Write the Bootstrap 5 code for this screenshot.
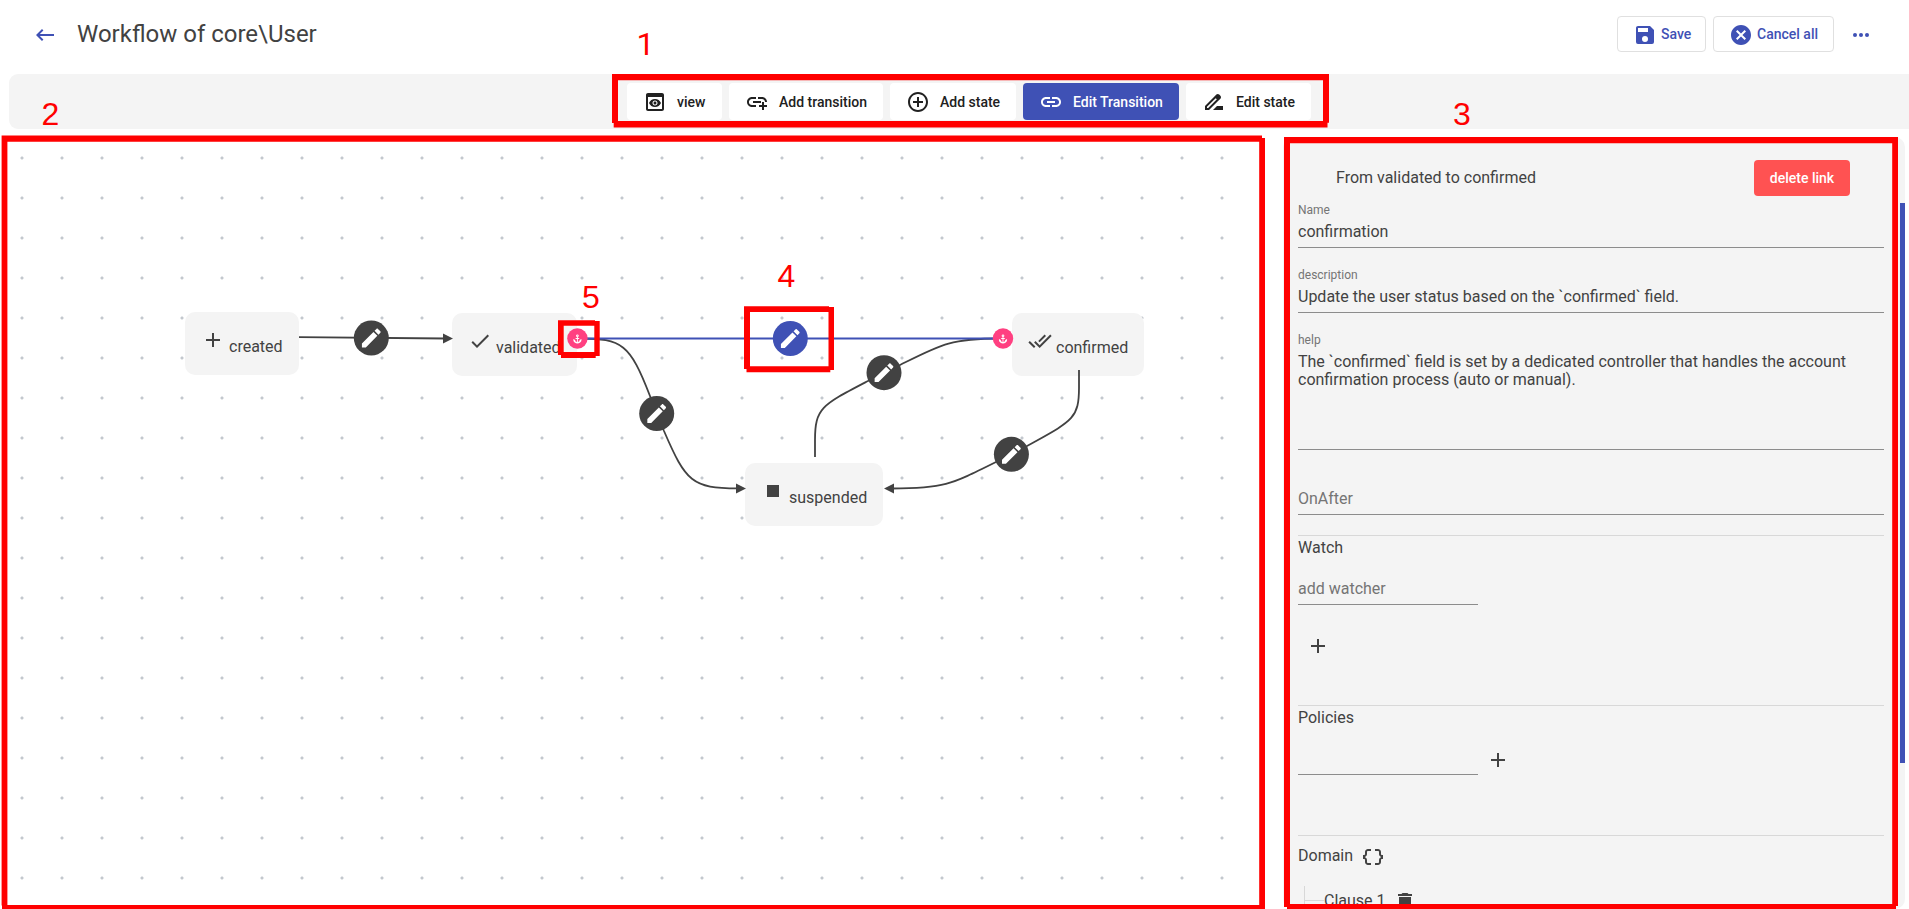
<!DOCTYPE html>
<html lang="en">
<head>
<meta charset="utf-8">
<title>Workflow of core\User</title>
<link rel="stylesheet" href="https://cdn.jsdelivr.net/npm/bootstrap@5.3.0/dist/css/bootstrap.min.css">
<script src="https://cdn.jsdelivr.net/npm/bootstrap@5.3.0/dist/js/bootstrap.bundle.min.js"></script>
<style>
  :root { --ink:#424242; --brand:#3f51b5; --panel:#f4f4f4; }
  body { font-family:Roboto,"Liberation Sans",sans-serif; color:var(--ink); height:909px; width:1909px; line-height:18px; }
  svg { display:block; flex:none; }
  .ico { width:24px; height:24px; fill:currentColor; }
  .topbar { height:74px; padding:0 42px 6px 33px; color:var(--brand); }
  .topbar h1 { font-size:24px; line-height:28px; font-weight:400; color:var(--ink); margin:0 0 0 20px; }
  .btn { font-size:14px; font-weight:500; line-height:20px; border-radius:4px; --bs-btn-border-color:transparent; white-space:nowrap; }
  .btn-head { height:36px; padding:0 15px; border-color:#e0e0e0; color:var(--brand); background:#fff; }
  .toolbar { height:55px; margin-left:9px; padding:0 0 0 618px; background:var(--panel); border-radius:9px 0 0 9px; gap:7px; }
  .btn-tool { height:37px; padding:0 16px; border:0; gap:10px; color:#212121; background:#fff; }
  .btn-tool.active { background:var(--brand) !important; color:#fff !important; }
  .board { width:1262px; height:772px; margin-top:8px; background:radial-gradient(circle at 20px 20px,#c3c8ce 1px,transparent 2px) 2px 1px/40px 40px; overflow:hidden; }
  .node { position:absolute; height:63px; padding:16px; background:var(--panel); border-radius:10px; font-size:16px; gap:4px; white-space:nowrap; }
  .node span { margin-top:10px; }
  .sidebar { width:622px; height:772px; margin:8px 4px 0 0; padding:23px 21px 0 15px; background:var(--panel); border-radius:10px; overflow:hidden; font-size:16px; }
  .btn-del { width:96px; height:36px; padding:0; background:#ff5252; color:#fff; border:0; margin-right:34px; }
  .field { border-bottom:1px solid #8c8c8c; padding:20px 0 6px; }
  .field label { display:block; font-size:12px; line-height:14px; color:#757575; margin-bottom:6px; }
  .field .value { height:18px; }
  .field .value.tall { height:90px; }
  .hint { color:#757575; }
  .short { width:180px; padding-top:0; }
  .rule { height:1px; background:#d8d8d8; margin-bottom:3px; }
  .thumb { position:absolute; left:1900px; top:203px; width:5px; height:560px; background:var(--brand); }
  .twig { width:20px; height:18px; margin-left:6px; border-left:1px solid #d8d8d8; }
  .twig i { display:block; margin-top:14px; height:1px; background:#d8d8d8; }
  .overlay { position:absolute; left:0; top:0; }
</style>
</head>
<body class="position-relative overflow-hidden bg-white">
<svg width="0" height="0" class="position-absolute"><defs>
  <symbol id="plus" viewBox="0 0 24 24"><path d="M19,13H13V19H11V13H5V11H11V5H13V11H19V13Z"/></symbol>
  <symbol id="pencil" viewBox="0 0 24 24"><path d="M20.71,7.04C21.1,6.65 21.1,6 20.71,5.63L18.37,3.29C18,2.9 17.35,2.9 16.96,3.29L15.12,5.12L18.87,8.87M17.81,9.93L14.06,6.18L3,17.25V21H6.75L17.81,9.93Z"/></symbol>
  <symbol id="anchor-sign" viewBox="0 0 24 24"><path d="M12 2a3 3 0 0 0-1 5.83V10H8v2h3v6.92C9.2 18.6 7.5 17.4 6.6 16L8 14.6 3 12v3c0 3.9 4.9 7 9 7s9-3.1 9-7v-3l-5 2.6L17.4 16c-.9 1.4-2.6 2.6-4.4 2.92V12h3v-2h-3V7.83A3 3 0 0 0 12 2zm0 2a1 1 0 1 1 0 2 1 1 0 0 1 0-2z"/></symbol>
  <g id="edit"><circle r="17.5"/><use href="#pencil" x="-12.5" y="-12.5" width="25" height="25" fill="#fff"/></g>
  <g id="anchor"><circle r="10.2" fill="#ff4081"/><use href="#anchor-sign" x="-5.4" y="-4.9" width="10.8" height="10.8" fill="#fff"/></g>
</defs></svg>

<header class="topbar d-flex align-items-center">
  <svg class="ico" style="margin-top:2px" viewBox="0 0 24 24"><path d="M21,11H6.83L10.41,7.41L9,6L3,12L9,18L10.41,16.58L6.83,13H21V11Z"/></svg>
  <h1>Workflow of core\User</h1>
  <button class="btn btn-head d-flex align-items-center ms-auto" style="width:89px"><svg class="ico me-1" style="margin-top:2px" viewBox="0 0 24 24"><path d="M15,9H5V5H15M12,19A3,3 0 0,1 9,16A3,3 0 0,1 12,13A3,3 0 0,1 15,16A3,3 0 0,1 12,19M17,3H5C3.89,3 3,3.9 3,5V19A2,2 0 0,0 5,21H19A2,2 0 0,0 21,19V7L17,3Z"/></svg>Save</button>
  <button class="btn btn-head d-flex align-items-center" style="margin-left:7px;width:121px"><svg class="ico me-1" style="margin-top:2px" viewBox="0 0 24 24"><path d="M12,2C17.53,2 22,6.47 22,12C22,17.53 17.53,22 12,22C6.47,22 2,17.53 2,12C2,6.47 6.47,2 12,2M15.59,7L12,10.59L8.41,7L7,8.41L10.59,12L7,15.59L8.41,17L12,13.41L15.59,17L17,15.59L13.41,12L17,8.41L15.59,7Z"/></svg>Cancel all</button>
  <svg class="ico" style="margin:2px -6px 0 15px" viewBox="0 0 24 24"><circle cx="6" cy="12" r="2"/><circle cx="12" cy="12" r="2"/><circle cx="18" cy="12" r="2"/></svg>
</header>

<nav class="toolbar d-flex align-items-center">
  <button class="btn btn-tool d-flex align-items-center" style="width:95px"><svg class="ico" viewBox="0 0 24 24"><path d="M19 3H5c-1.11 0-2 .9-2 2v14c0 1.1.89 2 2 2h14c1.1 0 2-.9 2-2V5c0-1.1-.89-2-2-2zm0 16H5V7h14v12zm-5.5-6c0 .83-.67 1.5-1.5 1.5s-1.5-.67-1.5-1.5.67-1.5 1.5-1.5 1.5.67 1.5 1.5zM12 9c-2.73 0-5.06 1.66-6 4 .94 2.34 3.27 4 6 4s5.06-1.66 6-4c-.94-2.34-3.27-4-6-4zm0 6.5c-1.38 0-2.5-1.12-2.5-2.5s1.12-2.5 2.5-2.5 2.5 1.12 2.5 2.5-1.12 2.5-2.5 2.5z"/></svg>view</button>
  <button class="btn btn-tool d-flex align-items-center" style="width:154px"><svg class="ico" viewBox="0 0 24 24"><path d="M8 11h8v2H8zm12.1 1H22c0-2.76-2.24-5-5-5h-4v1.9h4c1.71 0 3.1 1.39 3.1 3.1zM3.9 12c0-1.71 1.39-3.1 3.1-3.1h4V7H7c-2.76 0-5 2.24-5 5s2.24 5 5 5h4v-1.9H7c-1.71 0-3.1-1.39-3.1-3.1zM19 12h-2v3h-3v2h3v3h2v-3h3v-2h-3z"/></svg>Add transition</button>
  <button class="btn btn-tool d-flex align-items-center" style="width:126px"><svg class="ico" viewBox="0 0 24 24"><path d="M13 7h-2v4H7v2h4v4h2v-4h4v-2h-4V7zm-1-5C6.48 2 2 6.48 2 12s4.48 10 10 10 10-4.48 10-10S17.52 2 12 2zm0 18c-4.41 0-8-3.59-8-8s3.59-8 8-8 8 3.59 8 8-3.59 8-8 8z"/></svg>Add state</button>
  <button class="btn btn-tool active d-flex align-items-center" style="width:156px"><svg class="ico" viewBox="0 0 24 24"><path d="M3.9 12c0-1.71 1.39-3.1 3.1-3.1h4V7H7c-2.76 0-5 2.24-5 5s2.24 5 5 5h4v-1.9H7c-1.71 0-3.1-1.39-3.1-3.1zM8 13h8v-2H8v2zm9-6h-4v1.9h4c1.71 0 3.1 1.39 3.1 3.1s-1.39 3.1-3.1 3.1h-4V17h4c2.76 0 5-2.24 5-5s-2.24-5-5-5z"/></svg>Edit Transition</button>
  <button class="btn btn-tool d-flex align-items-center" style="width:125px"><svg class="ico" viewBox="0 0 24 24"><path d="M18.41 5.8L17.2 4.59c-.78-.78-2.05-.78-2.83 0l-2.68 2.68L3 15.96V20h4.04l8.74-8.74 2.63-2.63c.79-.78.79-2.05 0-2.83zM6.21 18H5v-1.21l8.66-8.66 1.21 1.21L6.21 18zM11 20l4-4h6v4H11z"/></svg>Edit state</button>
</nav>

<div class="d-flex justify-content-between">
  <main class="board">
    <div class="node d-flex" style="left:185px;top:312px;width:114px"><svg class="ico"><use href="#plus"/></svg><span>created</span></div>
    <div class="node d-flex" style="left:452px;top:313px;width:125px"><svg class="ico" viewBox="0 0 24 24"><path d="M21,7L9,19L3.5,13.5L4.91,12.09L9,16.17L19.59,5.59L21,7Z"/></svg><span>validated</span></div>
    <div class="node d-flex" style="left:1012px;top:313px;width:132px"><svg class="ico" viewBox="0 0 24 24"><path d="M0.41,13.41L6,19L7.41,17.58L1.83,12M22.24,5.58L11.66,16.17L7.5,12L6.07,13.41L11.66,19L23.66,7M18,7L16.59,5.58L10.24,11.93L11.66,13.34L18,7Z"/></svg><span>confirmed</span></div>
    <div class="node d-flex" style="left:745px;top:463px;width:138px"><svg class="ico" viewBox="0 0 24 24"><path d="M18,18H6V6H18V18Z"/></svg><span>suspended</span></div>
    <svg class="overlay" width="1262" height="909" fill="#424242">
      <g fill="none" stroke="#424242" stroke-width="1.8">
        <path d="M299,337.2L445,338.5"/>
        <path d="M580,338.5C622,338.5 630,344 650,396L664,431C686,482 692,488.3 738,488.3"/>
        <path d="M815,457V440C815,408 822,405 868,381L900,365C940,345 950,338.5 1000,338.5"/>
        <path d="M1079,370V388C1079,419 1072,421 1027,446L996,462C950,485 943,488.5 892,488.5"/>
      </g>
      <path d="M443,333.5L453,338.5L443,343.5ZM736,483.5L746,488.5L736,493.5ZM894,483.5L884,488.5L894,493.5Z"/>
      <path d="M580,338.5H1000" stroke="#3f51b5" stroke-width="2.2"/>
      <use href="#edit" x="371.3" y="338"/>
      <use href="#edit" x="790.3" y="338.5" fill="#3f51b5"/>
      <use href="#edit" x="656.7" y="413.5"/>
      <use href="#edit" x="884" y="372.7"/>
      <use href="#edit" x="1011.4" y="454.3"/>
      <use href="#anchor" x="577.4" y="338.5"/>
      <use href="#anchor" x="1003" y="338.5"/>
    </svg>
  </main>

  <aside class="sidebar">
    <div class="d-flex align-items-center justify-content-between"><span style="margin-left:38px">From validated to confirmed</span><button class="btn btn-del">delete link</button></div>
    <div class="field" style="padding-top:7px"><label>Name</label><div class="value">confirmation</div></div>
    <div class="field"><label>description</label><div class="value">Update the user status based on the `confirmed` field.</div></div>
    <div class="field"><label>help</label><div class="value tall">The `confirmed` field is set by a dedicated controller that handles the account<br>confirmation process (auto or manual).</div></div>
    <div class="field" style="padding-top:40px"><div class="value hint">OnAfter</div></div>
    <div class="rule" style="margin-top:20px"></div>
    <div>Watch</div>
    <div class="field short" style="margin-top:23px"><div class="value hint">add watcher</div></div>
    <svg class="ico" style="margin:29px 0 47px 8px"><use href="#plus"/></svg>
    <div class="rule"></div>
    <div>Policies</div>
    <div class="d-flex" style="margin-top:21px"><div class="field short" style="height:27px"></div><svg class="ico" style="margin-left:8px"><use href="#plus"/></svg></div>
    <div class="rule" style="margin:60px 0 9px"></div>
    <div class="d-flex"><span style="margin-top:2px">Domain</span><svg class="ico" style="margin-left:8px" viewBox="0 0 24 24"><path d="M4 7v2c0 .55-.45 1-1 1H2v4h1c.55 0 1 .45 1 1v2c0 1.65 1.35 3 3 3h3v-2H7c-.55 0-1-.45-1-1v-2c0-1.3-.84-2.42-2-2.83v-.34C5.16 11.42 6 10.3 6 9V7c0-.55.45-1 1-1h3V4H7C5.35 4 4 5.35 4 7zM21 10c-.55 0-1-.45-1-1V7c0-1.65-1.35-3-3-3h-3v2h3c.55 0 1 .45 1 1v2c0 1.3.84 2.42 2 2.83v.34c-1.16.41-2 1.52-2 2.83v2c0 .55-.45 1-1 1h-3v2h3c1.65 0 3-1.35 3-3v-2c0-.55.45-1 1-1h1v-4h-1z"/></svg></div>
    <div class="d-flex" style="margin-top:17px"><div class="twig"><i></i></div><span style="margin-top:6px">Clause 1</span><svg class="ico" style="margin:4px 0 0 7px" viewBox="0 0 24 24"><path d="M19,4H15.5L14.5,3H9.5L8.5,4H5V6H19M6,19A2,2 0 0,0 8,21H16A2,2 0 0,0 18,19V7H6V19Z"/></svg></div>
  </aside>
</div>
<div class="thumb"></div>

<!-- numbered callouts -->
<svg class="overlay" width="1909" height="909" fill="#f00" font-family="'Liberation Sans',sans-serif" font-size="32">
  <path d="M612,74H1329V122.7H1327.5V127.5H613.7V123H612ZM618,80.3V121H1323V80.3Z" fill-rule="evenodd"/>
  <path d="M1.6,135.6H1262V138H1265V909H2V905.5H1.6ZM7.4,141.8V905H1259.2V141.8Z" fill-rule="evenodd"/>
  <path d="M1284,137H1898V906H1896V909H1287V907H1284ZM1290,143.2V904H1892.2V143.2Z" fill-rule="evenodd"/>
  <path d="M744,306.3H829V307H834V370H830.3V372.2H746.5V369H744ZM750,312V366.2H828.5V312Z" fill-rule="evenodd"/>
  <path d="M558,320.2H595V321H599.7V356H595.7V358H561V355H558ZM563.7,325.7V352H594.3V325.7Z" fill-rule="evenodd"/>
  <text x="636.5" y="55" font-family="Roboto,sans-serif">1</text><text x="41.5" y="125">2</text><text x="1453" y="125">3</text><text x="777.5" y="287">4</text><text x="582" y="308">5</text>
</svg>
</body>
</html>
